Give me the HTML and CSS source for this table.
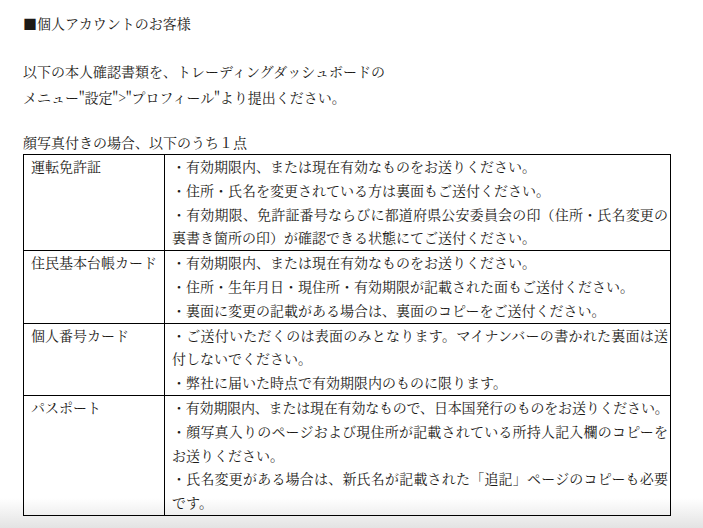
FILE: index.html
```html
<!DOCTYPE html>
<html lang="ja">
<head>
<meta charset="utf-8">
<title>個人アカウントのお客様</title>
<link rel="stylesheet" href="styles.css">
</head>
<body>
<div class="page">
  <h1 class="title">■個人アカウントのお客様</h1>
  <p class="intro">以下の本人確認書類を、トレーディングダッシュボードの<br>メニュー"設定"&gt;"プロフィール"より提出ください。</p>
  <p class="caption">顔写真付きの場合、以下のうち１点</p>
  <table class="docs">
    <colgroup><col class="c-name"><col class="c-note"></colgroup>
    <tr>
      <td class="name">運転免許証</td>
      <td class="note">
        <span class="ln">・有効期限内、または現在有効なものをお送りください。</span>
        <span class="ln">・住所・氏名を変更されている方は裏面もご送付ください。</span>
        <span class="ln full">・有効期限、免許証番号ならびに都道府県公安委員会の印（住所・氏名変更の</span>
        <span class="ln">裏書き箇所の印）が確認できる状態にてご送付ください。</span>
      </td>
    </tr>
    <tr>
      <td class="name">住民基本台帳カード</td>
      <td class="note">
        <span class="ln">・有効期限内、または現在有効なものをお送りください。</span>
        <span class="ln">・住所・生年月日・現住所・有効期限が記載された面もご送付ください。</span>
        <span class="ln">・裏面に変更の記載がある場合は、裏面のコピーをご送付ください。</span>
      </td>
    </tr>
    <tr>
      <td class="name">個人番号カード</td>
      <td class="note">
        <span class="ln full">・ご送付いただくのは表面のみとなります。マイナンバーの書かれた裏面は送</span>
        <span class="ln">付しないでください。</span>
        <span class="ln">・弊社に届いた時点で有効期限内のものに限ります。</span>
      </td>
    </tr>
    <tr>
      <td class="name">パスポート</td>
      <td class="note">
        <span class="ln tight">・有効期限内、または現在有効なもので、日本国発行のものをお送りください。</span>
        <span class="ln full">・顔写真入りのページおよび現住所が記載されている所持人記入欄のコピーを</span>
        <span class="ln">お送りください。</span>
        <span class="ln full">・氏名変更がある場合は、新氏名が記載された「追記」ページのコピーも必要</span>
        <span class="ln">です。</span>
      </td>
    </tr>
  </table>
</div>
</body>
</html>
```
FILE: styles.css
```css
html {
  height: 528px;
  background: linear-gradient(to bottom, #ffffff 0, #ffffff 498px, #e3e3e3 528px);
}
body {
  margin: 0;
  font-family: "Noto Serif CJK JP", "Noto Sans CJK JP", serif;
  font-size: 14px;
  color: #1c1a17;
}
.page {
  padding: 10px 0 0 23px;
}
.title {
  margin: 0;
  font-size: 14px;
  font-weight: normal;
  line-height: 26px;
}
.intro {
  margin: 22px 0 0;
  line-height: 26px;
}
.caption {
  margin: 21px 0 0;
  line-height: 23px;
}
.docs {
  border-collapse: collapse;
  width: 648px;
  table-layout: fixed;
}
.c-name { width: 141px; }
.docs td {
  border: 1px solid #000;
  padding: 0 0 0 7px;
  line-height: 23.8px;
  vertical-align: top;
}
.ln {
  display: block;
  white-space: nowrap;
}
.ln.full {
  width: 496px;
  text-align: justify;
  text-align-last: justify;
  text-justify: inter-character;
}
.ln.tight {
  letter-spacing: -0.2px;
}
```
